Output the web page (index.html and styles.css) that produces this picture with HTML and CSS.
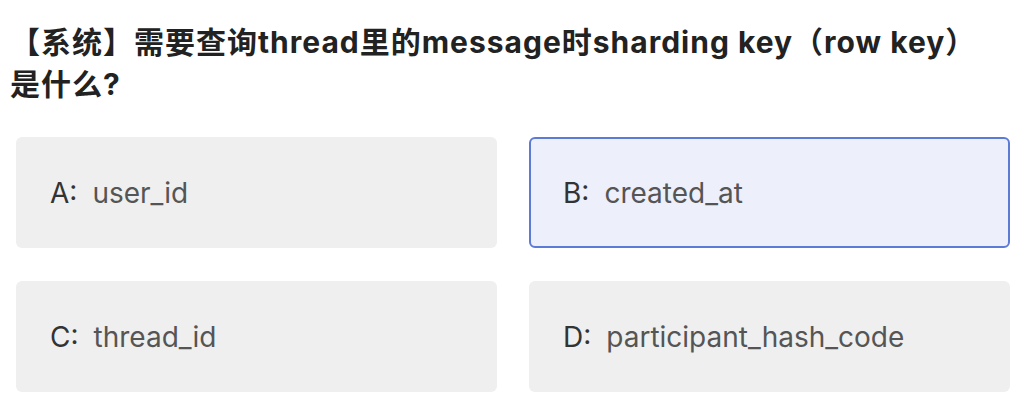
FILE: index.html
```html
<!DOCTYPE html>
<html lang="zh-CN">
<head>
<meta charset="utf-8">
<link rel="stylesheet" href="styles.css">
</head>
<body>
<div class="page">
  <h1 class="title">【系统】需要查询thread里的message时sharding key（row key）是什么?</h1>
  <div class="options">
    <div class="option"><span class="label">A:</span><span class="value">user_id</span></div>
    <div class="option selected"><span class="label">B:</span><span class="value">created_at</span></div>
    <div class="option"><span class="label">C:</span><span class="value">thread_id</span></div>
    <div class="option"><span class="label">D:</span><span class="value">participant_hash_code</span></div>
  </div>
</div>
</body>
</html>
```
FILE: styles.css
```css
html, body {
  margin: 0;
  padding: 0;
  background: #ffffff;
}
.page {
  padding: 21px 16px 0 16px;
  font-family: Inter, "Noto Sans CJK SC", sans-serif;
}
.title {
  margin: 0 24px 32px -6px;
  font-family: Inter, "Noto Sans CJK SC", sans-serif;
  font-size: 30px;
  line-height: 42px;
  font-weight: 700;
  letter-spacing: 1px;
  color: #222222;
}
.options {
  display: grid;
  grid-template-columns: 1fr 1fr;
  column-gap: 32px;
  row-gap: 33px;
}
.option {
  height: 111px;
  box-sizing: border-box;
  background: #efefef;
  border-radius: 6px;
  border: 2px solid transparent;
  display: flex;
  align-items: center;
  padding-left: 32px;
  font-size: 28px;
}
.option.selected {
  background: #edeffa;
  border-color: #5b7bd6;
}
.label {
  color: #333333;
}
.value {
  color: #555555;
  margin-left: 15px;
}
```
